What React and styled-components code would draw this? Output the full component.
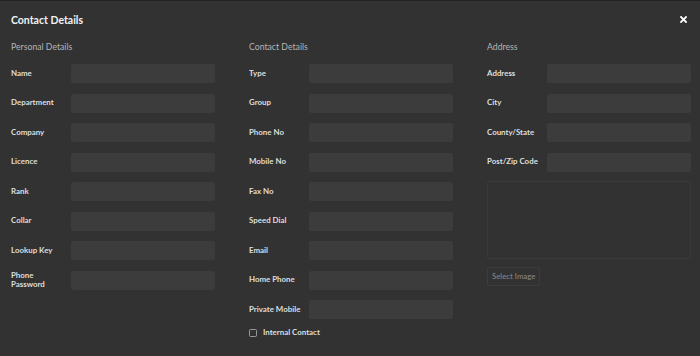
import React from "react";
import styled, { createGlobalStyle } from "styled-components";

const Global = createGlobalStyle`
  html, body { margin: 0; padding: 0; background: #323232; }
  body { font-family: Lato, "Open Sans", sans-serif; border-top: 1px solid #232323; }
  * { box-sizing: border-box; }
`;

const Dialog = styled.div`
  width: 700px;
  height: 355px;
  background: #323232;
  color: #e8e8e8;
  padding: 0 9px 0 11px;
`;

const Header = styled.div`
  display: flex;
  align-items: center;
  justify-content: space-between;
  height: 36px;
  padding-top: 1px;
`;

const Title = styled.h1`
  margin: 0;
  font-size: 10.5px;
  font-weight: 700;
  color: #f2f2f2;
`;

const Close = styled.button`
  border: none;
  background: none;
  padding: 0;
  width: 7px;
  height: 7px;
  display: flex;
  margin-right: 4px;
  margin-top: -1px;
  cursor: pointer;
`;

const Columns = styled.div`
  display: grid;
  grid-template-columns: repeat(3, 204px);
  column-gap: 34px;
`;

const Column = styled.section`
  display: flex;
  flex-direction: column;
`;

const SectionTitle = styled.h2`
  margin: 0;
  height: 27px;
  padding-top: 4px;
  font-size: 8.7px;
  font-weight: 400;
  color: #b4b4b4;
`;

const Rows = styled.div`
  display: grid;
  row-gap: 10.5px;
`;

const Row = styled.label`
  display: grid;
  grid-template-columns: 60px 144px;
  align-items: center;
  min-height: 19px;
`;

const Label = styled.span`
  font-size: 7.9px;
  font-weight: 700;
  color: #dedede;
  line-height: 9.5px;
  padding-right: 4px;
`;

const Input = styled.input`
  height: 19px;
  width: 144px;
  border: none;
  border-radius: 2px;
  background: #3c3c3c;
  outline: none;
  color: #eee;
`;

const ImageBox = styled.div`
  margin-top: 9px;
  height: 78px;
  border: 1px solid #3a3a3a;
  border-radius: 2px;
`;

const SelectButton = styled.button`
  align-self: flex-start;
  margin-top: 8px;
  height: 19px;
  padding: 0 4px;
  border: 1px solid #3c3c3c;
  border-radius: 2px;
  background: #323232;
  color: #8a8a8a;
  font-family: inherit;
  font-size: 7.8px;
`;

const CheckRow = styled.label`
  display: flex;
  align-items: center;
  gap: 6px;
  margin-top: 10px;
  height: 8px;
`;

const Box = styled.span`
  width: 8px;
  height: 8px;
  border: 1px solid #9a9a9a;
  border-radius: 1.5px;
`;

const personal = ["Name", "Department", "Company", "Licence", "Rank", "Collar", "Lookup Key", "Phone Password"];
const contact = ["Type", "Group", "Phone No", "Mobile No", "Fax No", "Speed Dial", "Email", "Home Phone", "Private Mobile"];
const address = ["Address", "City", "County/State", "Post/Zip Code"];

const Field = ({ label }) => (
  <Row>
    <Label>{label === "Phone Password" ? <>Phone<br />Password</> : label}</Label>
    <Input />
  </Row>
);

export default function App() {
  return (
    <>
      <Global />
      <Dialog>
        <Header>
          <Title>Contact Details</Title>
          <Close aria-label="Close">
            <svg width="7" height="7" viewBox="0 0 7 7">
              <path d="M1 1 L6 6 M6 1 L1 6" stroke="#fff" strokeWidth="1.8" strokeLinecap="square" />
            </svg>
          </Close>
        </Header>
        <Columns>
          <Column>
            <SectionTitle>Personal Details</SectionTitle>
            <Rows>{personal.map((l) => <Field key={l} label={l} />)}</Rows>
          </Column>
          <Column>
            <SectionTitle>Contact Details</SectionTitle>
            <Rows>{contact.map((l) => <Field key={l} label={l} />)}</Rows>
            <CheckRow>
              <Box />
              <Label>Internal Contact</Label>
            </CheckRow>
          </Column>
          <Column>
            <SectionTitle>Address</SectionTitle>
            <Rows>{address.map((l) => <Field key={l} label={l} />)}</Rows>
            <ImageBox />
            <SelectButton>Select Image</SelectButton>
          </Column>
        </Columns>
      </Dialog>
    </>
  );
}
